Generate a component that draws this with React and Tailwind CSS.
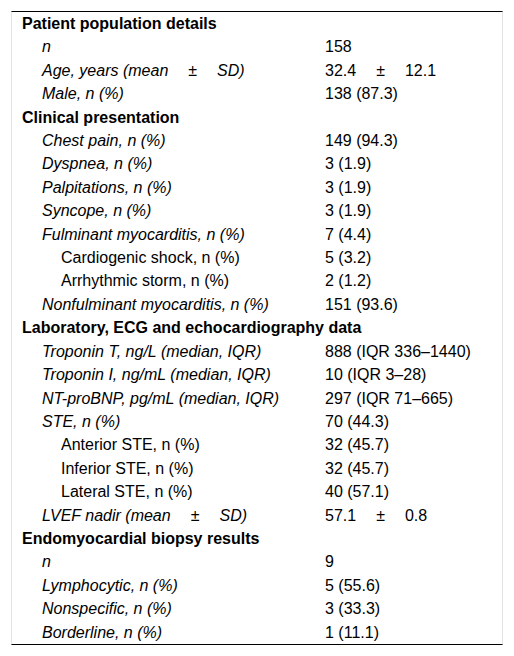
import React from 'react';

// rows: type 'h' = section heading, level 1 = italic item, level 2 = plain sub-item
const rows = [
  { type: 'h', label: 'Patient population details' },
  { level: 1, label: 'n', value: '158' },
  { level: 1, label: 'Age, years (mean ± SD)', value: '32.4 ± 12.1' },
  { level: 1, label: 'Male, n (%)', value: '138 (87.3)' },
  { type: 'h', label: 'Clinical presentation' },
  { level: 1, label: 'Chest pain, n (%)', value: '149 (94.3)' },
  { level: 1, label: 'Dyspnea, n (%)', value: '3 (1.9)' },
  { level: 1, label: 'Palpitations, n (%)', value: '3 (1.9)' },
  { level: 1, label: 'Syncope, n (%)', value: '3 (1.9)' },
  { level: 1, label: 'Fulminant myocarditis, n (%)', value: '7 (4.4)' },
  { level: 2, label: 'Cardiogenic shock, n (%)', value: '5 (3.2)' },
  { level: 2, label: 'Arrhythmic storm, n (%)', value: '2 (1.2)' },
  { level: 1, label: 'Nonfulminant myocarditis, n (%)', value: '151 (93.6)' },
  { type: 'h', label: 'Laboratory, ECG and echocardiography data' },
  { level: 1, label: 'Troponin T, ng/L (median, IQR)', value: '888 (IQR 336–1440)' },
  { level: 1, label: 'Troponin I, ng/mL (median, IQR)', value: '10 (IQR 3–28)' },
  { level: 1, label: 'NT-proBNP, pg/mL (median, IQR)', value: '297 (IQR 71–665)' },
  { level: 1, label: 'STE, n (%)', value: '70 (44.3)' },
  { level: 2, label: 'Anterior STE, n (%)', value: '32 (45.7)' },
  { level: 2, label: 'Inferior STE, n (%)', value: '32 (45.7)' },
  { level: 2, label: 'Lateral STE, n (%)', value: '40 (57.1)' },
  { level: 1, label: 'LVEF nadir (mean ± SD)', value: '57.1 ± 0.8' },
  { type: 'h', label: 'Endomyocardial biopsy results' },
  { level: 1, label: 'n', value: '9' },
  { level: 1, label: 'Lymphocytic, n (%)', value: '5 (55.6)' },
  { level: 1, label: 'Nonspecific, n (%)', value: '3 (33.3)' },
  { level: 1, label: 'Borderline, n (%)', value: '1 (11.1)' },
];

// the ± sign sits with wide gaps on both sides
function PlusMinus({ text }) {
  const parts = text.split(' ± ');
  if (parts.length === 1) return text;
  return (
    <>
      {parts[0]}
      <span className="mx-[20px]">±</span>
      {parts[1]}
    </>
  );
}

export default function App() {
  return (
    <div className="bg-white p-[11px] font-['Liberation_Sans',Arial,sans-serif] text-[16px] text-black">
      <div className="border border-x-[#e2e2e2] border-y-black">
        {rows.map((row, i) =>
          row.type === 'h' ? (
            <div key={i} className="py-[2px] pl-[10px] leading-[19.4px] font-bold">
              {row.label}
            </div>
          ) : (
            <div key={i} className="grid grid-cols-[303px_1fr] py-[2px] leading-[19.4px]">
              <div className={row.level === 1 ? 'pl-[30px] italic' : 'pl-[49px]'}>
                <PlusMinus text={row.label} />
              </div>
              <div className="pl-[10px]">
                <PlusMinus text={row.value} />
              </div>
            </div>
          )
        )}
      </div>
    </div>
  );
}
